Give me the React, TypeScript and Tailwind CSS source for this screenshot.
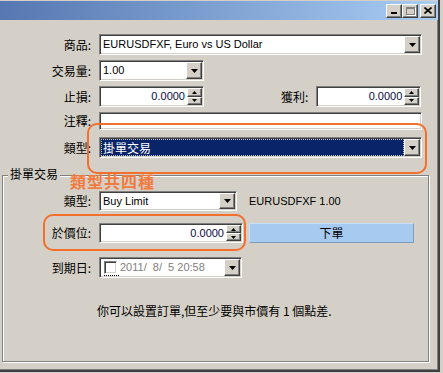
import React from 'react';

const font = "font-[family-name:'Liberation_Sans','Noto_Sans_CJK_TC',sans-serif]";
const cjk = "font-[family-name:'Noto_Sans_CJK_TC',sans-serif]";

// classic Win2k sunken edit frame
const sunken =
  'bg-white border border-t-[#808080] border-l-[#808080] border-b-white border-r-white shadow-[inset_1px_1px_0_#404040,inset_-1px_-1px_0_#d4d0c8]';
const raised =
  'bg-[#d4d0c8] border border-t-white border-l-white border-b-[#404040] border-r-[#404040] shadow-[inset_-1px_-1px_0_#808080]';

const Arrow = ({ up = false, small = false }: { up?: boolean; small?: boolean }) => (
  <svg width={small ? 5 : 7} height={small ? 3 : 4} viewBox={small ? '0 0 5 3' : '0 0 7 4'}>
    {small ? (
      <path d={up ? 'M2.5 0 L5 3 L0 3 Z' : 'M0 0 L5 0 L2.5 3 Z'} fill="#000" />
    ) : (
      <path d={up ? 'M3.5 0 L7 4 L0 4 Z' : 'M0 0 L7 0 L3.5 4 Z'} fill="#000" />
    )}
  </svg>
);

const DropBtn = () => (
  <div className={`${raised} w-[16px] h-full flex items-center justify-center shrink-0`}>
    <Arrow />
  </div>
);

const Spin = () => (
  <div className="flex flex-col w-[15px] h-full shrink-0">
    <div className={`${raised} flex-1 flex items-center justify-center`}>
      <Arrow up small />
    </div>
    <div className={`${raised} flex-1 flex items-center justify-center`}>
      <Arrow small />
    </div>
  </div>
);

const Combo = ({ w, h = 21, children }: { w: number; h?: number; children?: React.ReactNode }) => (
  <div className={`${sunken} flex items-stretch p-[1px]`} style={{ width: w, height: h }}>
    <div className="flex-1 flex items-center min-w-0">{children}</div>
    <DropBtn />
  </div>
);

const SpinEdit = ({ w, h = 21, value }: { w: number; h?: number; value: string }) => (
  <div className={`${sunken} flex items-stretch p-[1px]`} style={{ width: w, height: h }}>
    <div className="flex-1 flex items-center justify-end pr-[2px] text-[11px] text-[#0c0c3c]">{value}</div>
    <Spin />
  </div>
);

const Label = ({ w = 91, children }: { w?: number; children: React.ReactNode }) => (
  <span className={`${cjk} text-[12px] text-right leading-none shrink-0 mr-[8px]`} style={{ width: w }}>
    {children}
  </span>
);

export default function App() {
  return (
    <div className={`${font} relative w-[443px] h-[373px] bg-[#d4d0c8] overflow-hidden text-black`}>
      <div className="w-[440px] h-[372px] border-r-2 border-b-2 border-r-[#404040] border-b-[#404040] shadow-[inset_-1px_-1px_0_#808080]">
        {/* title bar */}
        <div className="h-[20px] border-t border-[#d4d0c8] bg-gradient-to-r from-[#5677b1] to-[#a9cdf3] flex items-center justify-end pr-[2px]">
          <div className="flex items-center">
            <div className={`${raised} w-[16px] h-[14px] flex items-end justify-center pb-[3px]`}>
              <div className="w-[6px] h-[2px] bg-black" />
            </div>
            <div className={`${raised} w-[16px] h-[14px] flex items-center justify-center`}>
              <div className="w-[9px] h-[8px] border border-t-2 border-[#808080] shadow-[1px_1px_0_white]" />
            </div>
            <div className={`${raised} w-[16px] h-[14px] ml-[2px] flex items-center justify-center`}>
              <svg width="8" height="7" viewBox="0 0 8 7">
                <path d="M0.5 0.5 L7.5 6.5 M7.5 0.5 L0.5 6.5" stroke="#000" strokeWidth="1.6" />
              </svg>
            </div>
          </div>
        </div>

        {/* top form */}
        <div className="pt-[14px] flex flex-col">
          <div className="flex items-center h-[21px]">
            <Label>商品:</Label>
            <Combo w={323}>
              <span className="text-[11px] pl-[2px]">EURUSDFXF, Euro vs US Dollar</span>
            </Combo>
          </div>
          <div className="flex items-center h-[21px] mt-[5px]">
            <Label>交易量:</Label>
            <Combo w={105}>
              <span className="text-[11px] pl-[2px]">1.00</span>
            </Combo>
          </div>
          <div className="flex items-center h-[21px] mt-[5px]">
            <Label>止損:</Label>
            <SpinEdit w={105} value="0.0000" />
            <span className={`${cjk} text-[12px] leading-none ml-[77px] mr-[8px]`}>獲利:</span>
            <SpinEdit w={105} value="0.0000" />
          </div>
          <div className="flex items-center h-[18px] mt-[5px]">
            <Label>注釋:</Label>
            <div className={`${sunken} w-[323px] h-[18px]`} />
          </div>
          <div className="flex items-center h-[21px] mt-[7px]">
            <Label>類型:</Label>
            <Combo w={323}>
              <div className="h-full w-full bg-[#0a246a] outline-1 outline-dotted outline-[#c0c0c0] -outline-offset-1 flex items-center">
                <span className={`${cjk} text-[12px] text-white pl-[2px] leading-none`}>掛單交易</span>
              </div>
            </Combo>
          </div>

          {/* group box */}
          <div className="relative mt-[17px] ml-[2px] w-[427px] h-[187px] border border-[#808080] shadow-[1px_1px_0_white,inset_1px_1px_0_white] pt-[15px] flex flex-col">
            <span className={`${cjk} absolute -top-[8px] left-[5px] px-[2px] bg-[#d4d0c8] text-[12px] leading-none`}>
              掛單交易
            </span>
            <div className="flex items-center h-[20px]">
              <Label w={88}>類型:</Label>
              <Combo w={138} h={20}>
                <span className="text-[11px] pl-[2px]">Buy Limit</span>
              </Combo>
              <span className="text-[11px] ml-[12px]">EURUSDFXF 1.00</span>
            </div>
            <div className="flex items-center h-[20px] mt-[12px]">
              <Label w={88}>於價位:</Label>
              <SpinEdit w={144} h={20} value="0.0000" />
              <button className="ml-[6px] w-[165px] h-[20px] bg-[#a6caf0] border border-t-[#c8ddf6] border-l-[#c8ddf6] border-b-[#7f9db9] border-r-[#7f9db9] flex items-center justify-center">
                <span className={`${cjk} text-[12px] leading-none`}>下單</span>
              </button>
            </div>
            <div className="flex items-center h-[21px] mt-[14px]">
              <Label w={88}>到期日:</Label>
              <Combo w={143}>
                <div className="flex items-center pl-[3px] gap-[3px]">
                  <div className="relative">
                    <div className={`${sunken} w-[13px] h-[13px]`} />
                    <div className="absolute left-0 -bottom-[2px] w-[15px] border-b border-dotted border-black" />
                  </div>
                  <span className="text-[11px] text-[#808080] whitespace-pre">2011/  8/  5 20:58</span>
                </div>
              </Combo>
            </div>
            <div className={`${cjk} text-[12px] mt-[27px] ml-[94px] leading-none whitespace-pre`}>
              你可以設置訂單,但至少要與市價有 1 個點差.
            </div>
          </div>
        </div>
      </div>

      {/* annotations */}
      <div className="absolute left-[87px] top-[123px] w-[340px] h-[51px] border-2 border-[#f36f2c] rounded-[10px]" />
      <div className="absolute left-[43px] top-[214px] w-[203px] h-[37px] border-2 border-[#f36f2c] rounded-[10px]" />
      <span className={`${cjk} absolute left-[70px] top-[173px] text-[16px] font-bold leading-none text-[#f37a3c] tracking-[1px]`}>
        類型共四種
      </span>
    </div>
  );
}
